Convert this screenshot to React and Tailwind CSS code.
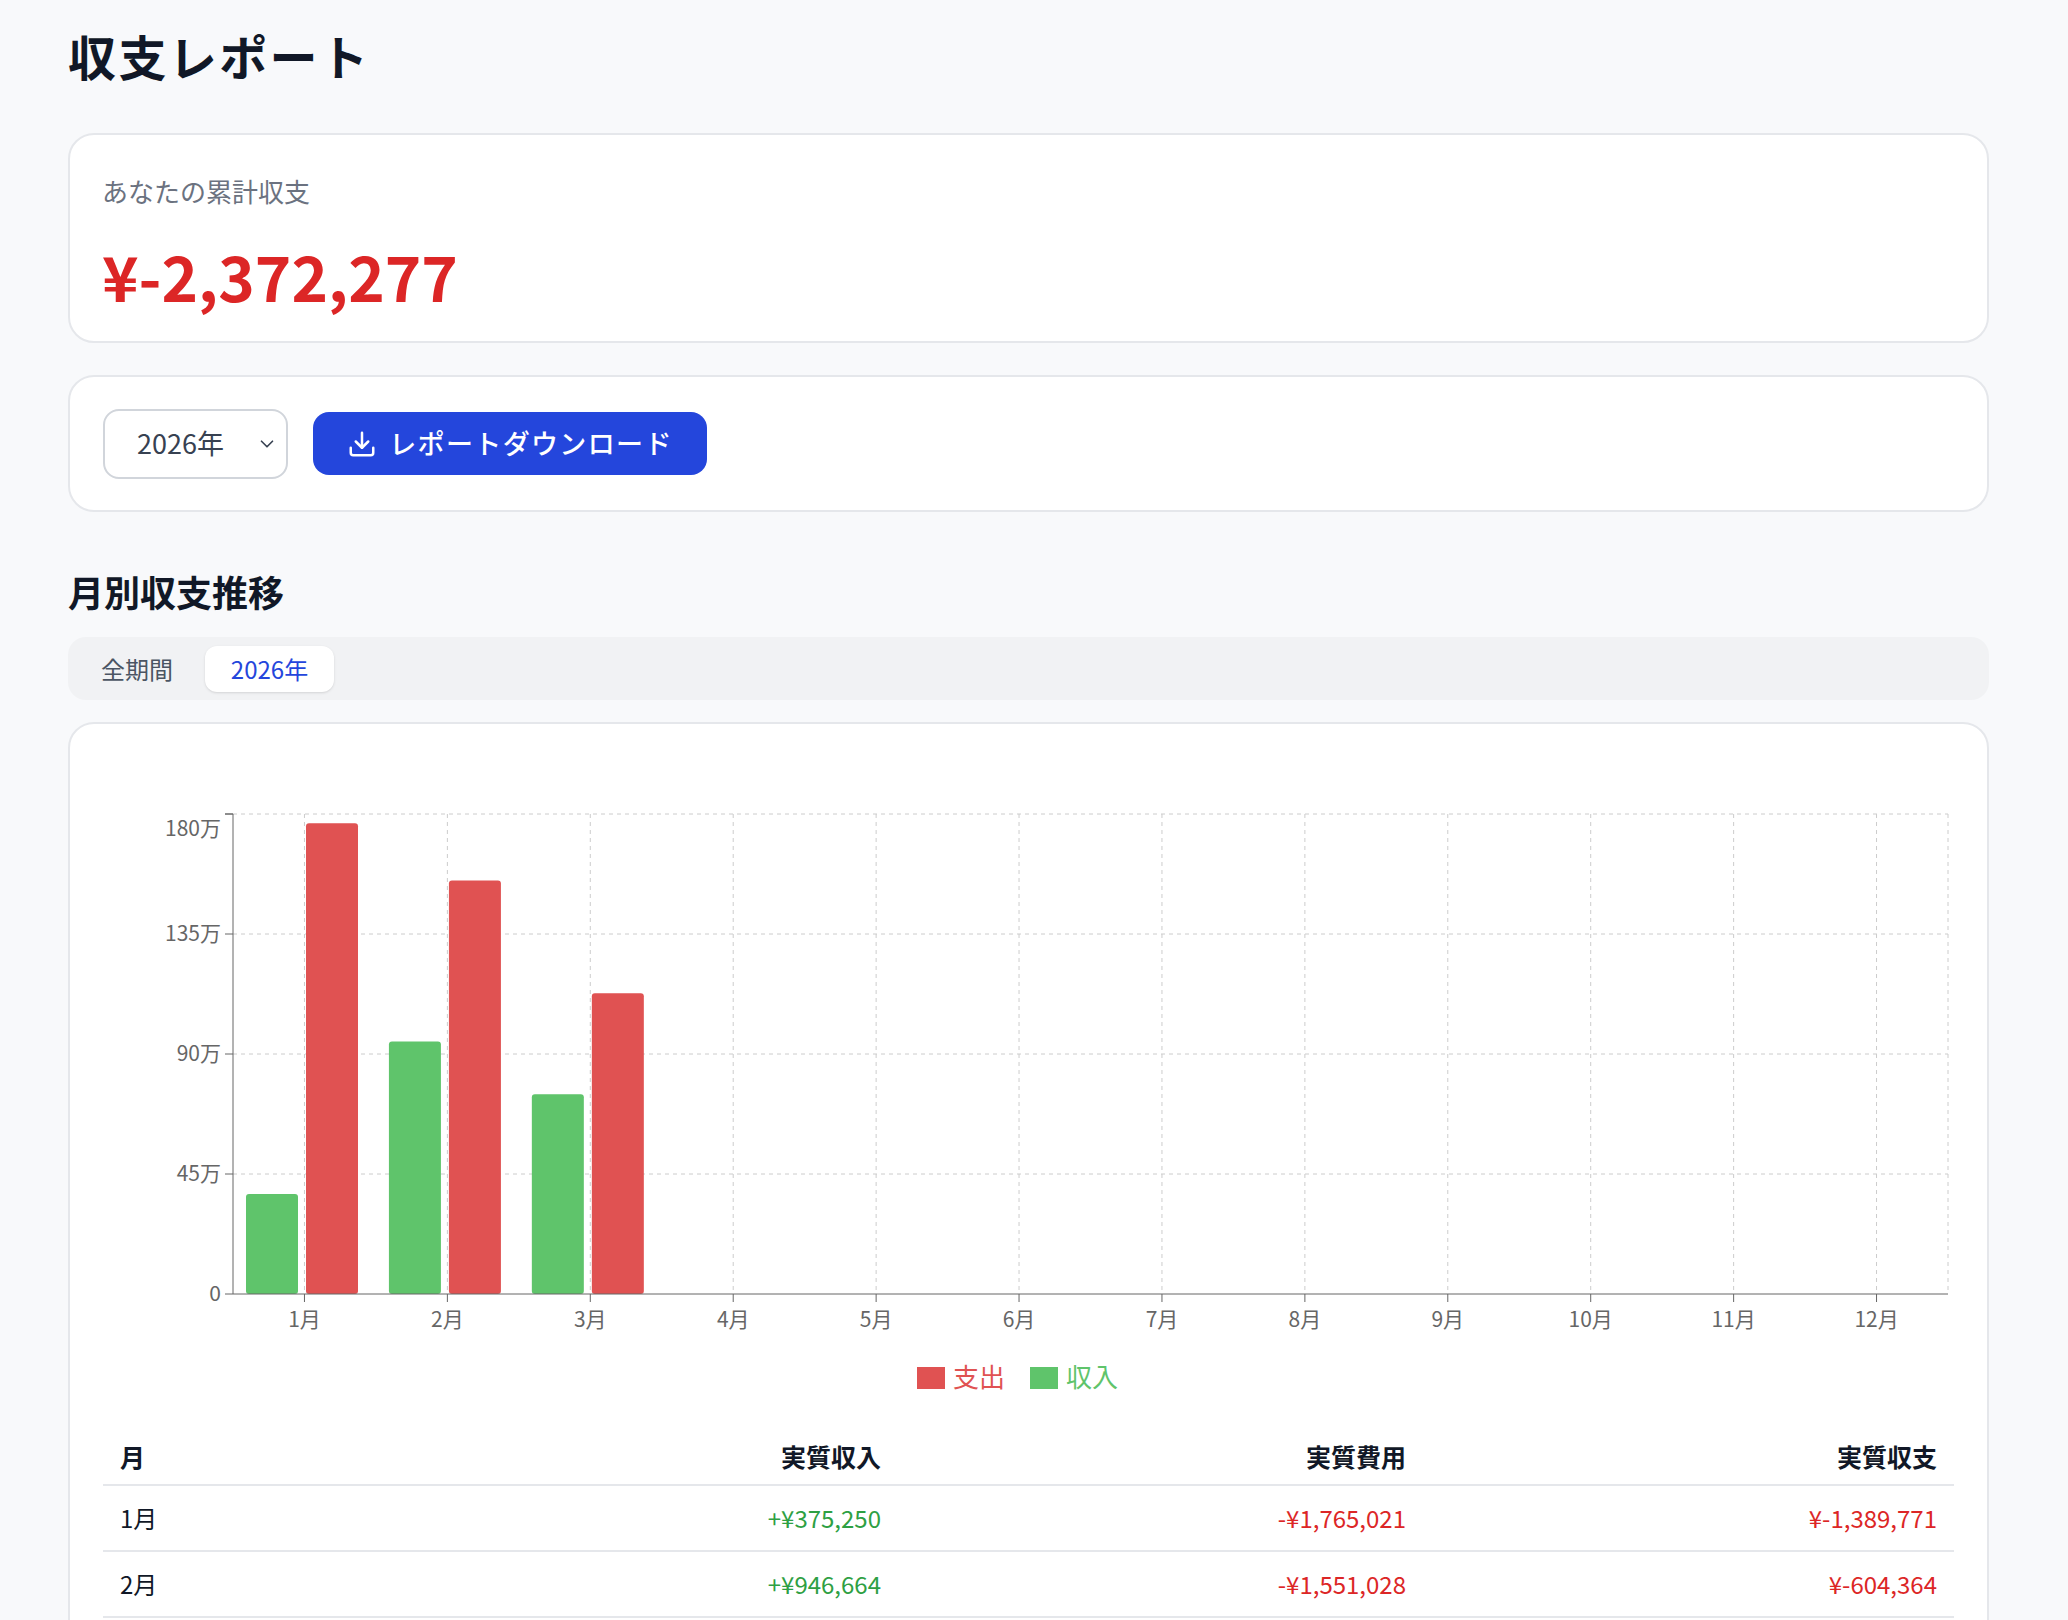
import { Download, ChevronDown } from 'lucide-react';

const font = { fontFamily: '"Noto Sans CJK JP", "Noto Sans", sans-serif' };

const months = [
  { m: '1月', inc: 375250, exp: 1765021 },
  { m: '2月', inc: 946664, exp: 1551028 },
  { m: '3月', inc: 749330, exp: 1127472 },
  ...['4月', '5月', '6月', '7月', '8月', '9月', '10月', '11月', '12月'].map((m) => ({ m, inc: 0, exp: 0 })),
];

const yen = (n) => n.toLocaleString('en-US');

function Chart() {
  const x0 = 163, x1 = 1878, y0 = 90, y1 = 570;
  const slot = (x1 - x0) / 12;
  const y = (v) => y1 - (v / 1800000) * (y1 - y0);
  const ticks = [0, 450000, 900000, 1350000, 1800000];
  return (
    <svg width="1919" height="680" className="block" style={font}>
      {ticks.map((t) => (
        <g key={t}>
          {t > 0 && <line x1={x0} x2={x1} y1={y(t)} y2={y(t)} stroke="#cccccc" strokeDasharray="4 4" />}
          <line x1={x0 - 8} x2={x0} y1={y(t)} y2={y(t)} stroke="#666" />
          <text x={x0 - 12} y={t === 1800000 ? y(t) + 22 : y(t) + 7} textAnchor="end" fontSize="21" fill="#666">
            {t === 0 ? '0' : `${t / 10000}万`}
          </text>
        </g>
      ))}
      <line x1={x1} x2={x1} y1={y0} y2={y1} stroke="#cccccc" strokeDasharray="4 4" />
      {months.map((d, i) => {
        const cx = x0 + slot * i + slot / 2;
        const bx = x0 + slot * i + 13;
        return (
          <g key={d.m}>
            <line x1={cx} x2={cx} y1={y0} y2={y1} stroke="#cccccc" strokeDasharray="4 4" />
            <line x1={cx} x2={cx} y1={y1} y2={y1 + 8} stroke="#666" />
            <text x={cx} y={y1 + 33} textAnchor="middle" fontSize="21" fill="#666">{d.m}</text>
            {d.inc > 0 && <rect x={bx} y={y(d.inc)} width="52" height={y1 - y(d.inc)} rx="3" fill="#5fc46b" />}
            {d.exp > 0 && <rect x={bx + 60} y={y(d.exp)} width="52" height={y1 - y(d.exp)} rx="3" fill="#e05252" />}
          </g>
        );
      })}
      <line x1={x0} x2={x0} y1={y0} y2={y1} stroke="#666" />
      <line x1={x0 - 8} x2={x0} y1={y0} y2={y0} stroke="#666" />
      <line x1={x0} x2={x1} y1={y1} y2={y1} stroke="#666" />
      <rect x="847" y="643" width="28" height="22" fill="#e05252" />
      <text x="883" y="663" fontSize="26" fill="#e05252">支出</text>
      <rect x="960" y="643" width="28" height="22" fill="#5fc46b" />
      <text x="996" y="663" fontSize="26" fill="#5fc46b">収入</text>
    </svg>
  );
}

const cols = 'grid grid-cols-[400px_361px_525px_1fr] items-center border-b-2 border-[#e5e7eb] px-[17px]';

export default function App() {
  const rows = months.slice(0, 3);
  return (
    <div className="min-h-screen bg-[#f8f9fb] pl-[68px] pr-[79px] pt-[31px] pb-10 text-[#111827]" style={font}>
      <h1 className="text-[48px] font-bold leading-none tracking-wider">収支レポート</h1>

      <div className="mt-[54px] h-[210px] rounded-[26px] border-2 border-[#e5e7eb] bg-white px-[32px] pt-[36px]">
        <div className="text-[26px] text-[#6b7280]">あなたの累計収支</div>
        <div className="mt-[34px] text-[62px] font-bold leading-none text-[#dc2626]">¥-2,372,277</div>
      </div>

      <div className="mt-[32px] flex h-[137px] items-center gap-[25px] rounded-[26px] border-2 border-[#e5e7eb] bg-white px-[33px]">
        <div className="flex h-[70px] w-[185px] items-center justify-between rounded-[16px] border-2 border-[#d1d5db] px-[32px] pr-[8px] text-[27px] text-[#374151]">
          <span>2026年</span>
          <ChevronDown size={22} strokeWidth={1.8} />
        </div>
        <button className="flex h-[63px] w-[394px] items-center justify-center gap-[12px] rounded-[16px] bg-[#2446dc] text-[27px] font-medium tracking-wider text-white">
          <Download size={30} strokeWidth={2} />
          レポートダウンロード
        </button>
      </div>

      <h2 className="mt-[61px] text-[36px] font-bold leading-none">月別収支推移</h2>

      <div className="mt-[28px] flex h-[63px] items-center gap-[32px] rounded-[18px] bg-[#f1f2f4] px-[33px]">
        <span className="text-[24px] text-[#4b5563]">全期間</span>
        <span className="flex h-[46px] w-[129px] items-center justify-center rounded-[12px] bg-white text-[24px] text-[#2446dc] shadow-sm">2026年</span>
      </div>

      <div className="mt-[22px] rounded-[26px] border-2 border-[#e5e7eb] bg-white pb-[30px]">
        <Chart />
        <div className="mx-[33px] mt-[26px]">
          <div className={`${cols} h-[56px] text-[25px] font-bold`}>
            <span>月</span>
            <span className="text-right">実質収入</span>
            <span className="text-right">実質費用</span>
            <span className="text-right">実質収支</span>
          </div>
          {rows.map((r) => (
            <div key={r.m} className={`${cols} h-[66px] text-[24px]`}>
              <span>{r.m}</span>
              <span className="text-right text-[#2ea043]">+¥{yen(r.inc)}</span>
              <span className="text-right text-[#dc2626]">-¥{yen(r.exp)}</span>
              <span className="text-right text-[#dc2626]">¥-{yen(r.exp - r.inc)}</span>
            </div>
          ))}
        </div>
      </div>
    </div>
  );
}
